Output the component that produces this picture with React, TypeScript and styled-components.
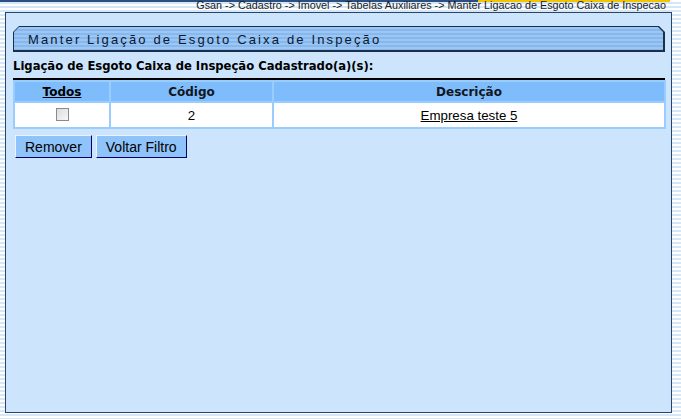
import React from "react";
import styled, { createGlobalStyle } from "styled-components";

const GlobalStyle = createGlobalStyle`
  html, body {
    margin: 0;
    padding: 0;
  }
  body {
    width: 681px;
    height: 419px;
    overflow: hidden;
    background: repeating-linear-gradient(
      to bottom,
      #ffffff 0,
      #ffffff 2px,
      #d4e7f8 2px,
      #d4e7f8 4px
    );
    font-family: "Liberation Sans", Arial, sans-serif;
  }
`;

const Breadcrumb = styled.div`
  height: 12px;
  padding-right: 15px;
  text-align: right;
  font-size: 10.8px;
  line-height: 11px;
  color: #1a1a1a;
  background: linear-gradient(
      to right,
      #2b4f80 0,
      #2b4f80 478px,
      #f5c400 478px,
      #f5c400 670px,
      transparent 670px
    )
    top left / 100% 2px no-repeat;
  white-space: nowrap;
`;

const Panel = styled.section`
  margin-left: 5px;
  width: 652px;
  height: 386px;
  padding: 13px 6px 0 7px;
  background: #cce5fd;
  border: 1px solid #2a4466;
`;

const TitleOuter = styled.div`
  height: 26px;
  padding: 1px 2px 2px 1px;
  box-sizing: border-box;
  background: #1d2f48;
  clip-path: polygon(6px 0, calc(100% - 6px) 0, 100% 6px, 100% 100%, 0 100%, 0 6px);
`;

const TitleInner = styled.div`
  height: 100%;
  display: flex;
  align-items: center;
  padding-left: 14px;
  padding-top: 2px;
  box-sizing: border-box;
  background: repeating-linear-gradient(
    to bottom,
    #9cc7f4 0,
    #9cc7f4 2px,
    #86b8ee 2px,
    #86b8ee 4px
  );
  clip-path: polygon(5px 0, calc(100% - 5px) 0, 100% 5px, 100% 100%, 0 100%, 0 5px);
  font-size: 13px;
  letter-spacing: 2.15px;
  color: #0c1830;
`;

const Heading = styled.h2`
  margin: 8px 0 0;
  font-family: "DejaVu Sans", Verdana, sans-serif;
  font-size: 11.6px;
  font-weight: bold;
  line-height: 13px;
  color: #000;
`;

const Rule = styled.div`
  margin-top: 5px;
  height: 2px;
  background: #000;
`;

const Grid = styled.table`
  width: 653px;
  border-collapse: separate;
  border-spacing: 2px;
  background: #99ccff;
`;

const HeadCell = styled.th<{ $w?: number }>`
  width: ${(p) => (p.$w ? `${p.$w}px` : "auto")};
  height: 19px;
  padding: 0;
  background: #7fbcfb;
  font-family: "DejaVu Sans", Verdana, sans-serif;
  font-size: 12px;
  font-weight: bold;
  color: #10161e;
  text-align: center;
`;

const HeadLink = styled.span`
  text-decoration: underline;
  color: #000;
`;

const Cell = styled.td`
  height: 24px;
  padding: 0;
  background: #ffffff;
  font-size: 13.3px;
  color: #000;
  text-align: center;
`;

const RowLink = styled.span`
  text-decoration: underline;
`;

const Check = styled.span`
  display: inline-block;
  width: 11px;
  height: 11px;
  border: 1px solid #8a8a8a;
  background: linear-gradient(135deg, #dcdcdc, #f8f8f8);
  vertical-align: middle;
  margin-top: -3px;
`;

const Actions = styled.div`
  display: flex;
  gap: 4px;
  margin-top: 6px;
  padding-left: 2px;
`;

const Button = styled.button`
  height: 23px;
  padding: 0 9px;
  background: #8fc4fa;
  border-top: 1px solid #e8f3ff;
  border-left: 1px solid #e8f3ff;
  border-right: 1px solid #000066;
  border-bottom: 1px solid #000066;
  font-family: "Liberation Sans", Arial, sans-serif;
  font-size: 14px;
  color: #000;
`;

export default function App() {
  return (
    <>
      <GlobalStyle />
      <Breadcrumb>
        Gsan -&gt; Cadastro -&gt; Imovel -&gt; Tabelas Auxiliares -&gt; Manter Ligacao de Esgoto
        Caixa de Inspecao
      </Breadcrumb>
      <Panel>
        <TitleOuter>
          <TitleInner>Manter Ligação de Esgoto Caixa de Inspeção</TitleInner>
        </TitleOuter>
        <Heading>Ligação de Esgoto Caixa de Inspeção Cadastrado(a)(s):</Heading>
        <Rule />
        <Grid>
          <thead>
            <tr>
              <HeadCell $w={94}>
                <HeadLink>Todos</HeadLink>
              </HeadCell>
              <HeadCell $w={161}>Código</HeadCell>
              <HeadCell>Descrição</HeadCell>
            </tr>
          </thead>
          <tbody>
            <tr>
              <Cell>
                <Check />
              </Cell>
              <Cell>2</Cell>
              <Cell>
                <RowLink>Empresa teste 5</RowLink>
              </Cell>
            </tr>
          </tbody>
        </Grid>
        <Actions>
          <Button>Remover</Button>
          <Button>Voltar Filtro</Button>
        </Actions>
      </Panel>
    </>
  );
}
